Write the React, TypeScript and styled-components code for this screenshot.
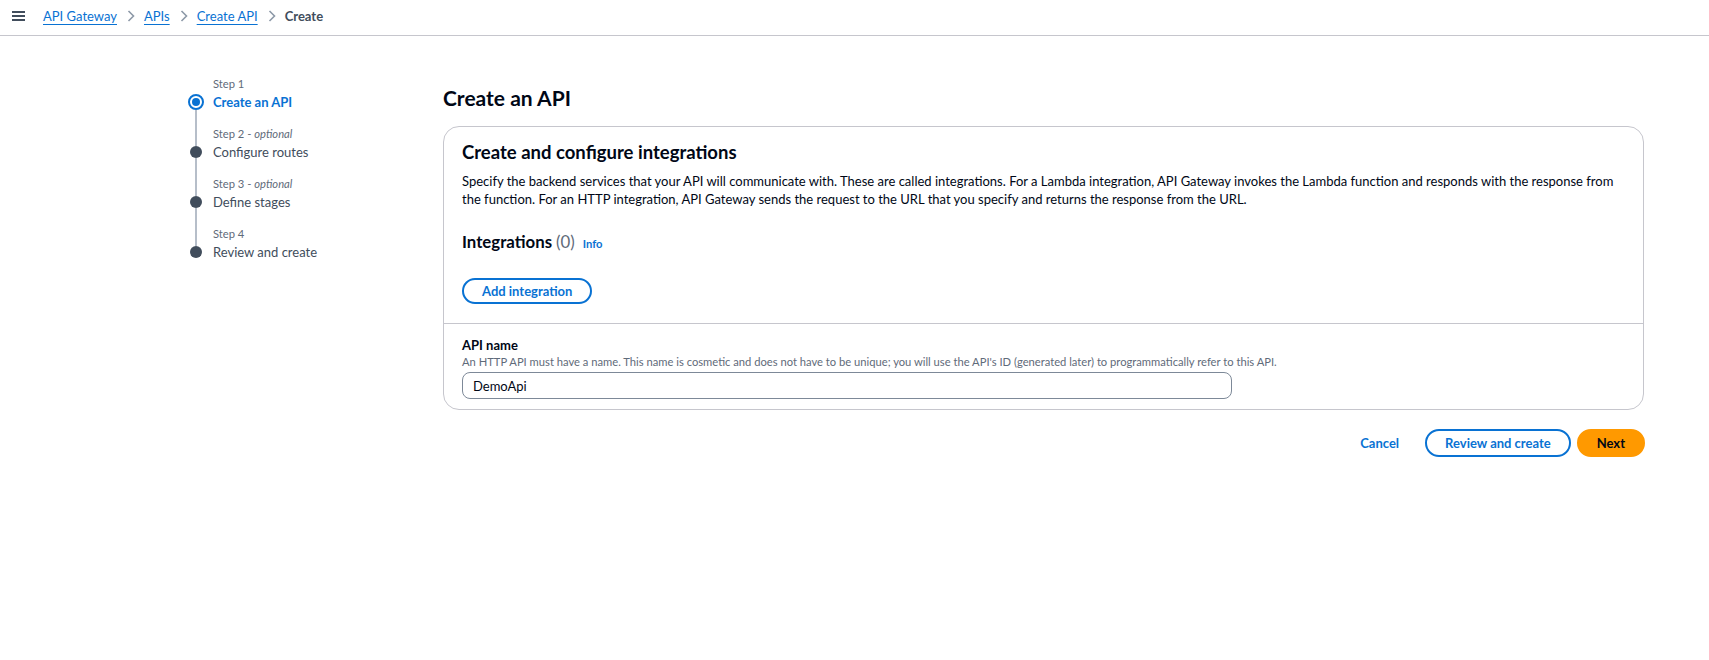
import React from "react";
import styled, { createGlobalStyle } from "styled-components";

const GlobalStyle = createGlobalStyle`
  html, body { margin: 0; padding: 0; background: #ffffff; }
  body {
    font-family: Lato, "Liberation Sans", sans-serif;
    color: #000716;
    -webkit-font-smoothing: antialiased;
  }
  * { box-sizing: border-box; }
`;

const BLUE = "#0972d3";
const GREY = "#5f6b7a";
const DARK = "#414d5c";

/* ---------- top bar ---------- */
const TopBar = styled.header`
  height: 36px;
  border-bottom: 1px solid #c6c6cd;
  display: flex;
  align-items: center;
  padding: 0 0 3px 12px;
`;

const MenuButton = styled.span`
  display: inline-flex;
  width: 13px;
  height: 10px;
  margin-right: 18px;
  color: ${DARK};
`;

const Crumbs = styled.nav`
  display: flex;
  align-items: center;
  font-size: 13px;
`;

const CrumbLink = styled.a`
  color: ${BLUE};
  text-decoration: underline;
  text-underline-offset: 3px;
  text-decoration-thickness: 1px;
  line-height: 18px;
`;

const CrumbCurrent = styled.span`
  color: ${DARK};
  font-weight: 700;
  line-height: 18px;
`;

const CrumbSep = styled.span`
  display: inline-flex;
  width: 8px;
  margin: 0 9px 0 10px;
  color: #8d99a8;
`;

/* ---------- main layout ---------- */
const Main = styled.main`
  display: flex;
  padding: 40px 65px 0 188px;
`;

const StepNav = styled.ol`
  list-style: none;
  margin: 0;
  padding: 0;
  width: 255px;
  flex: none;
`;

const StepItem = styled.li<{ $last?: boolean }>`
  display: grid;
  grid-template-columns: 16px 1fr;
  column-gap: 9px;
  height: ${(p) => (p.$last ? "36px" : "50px")};
`;

const Rail = styled.div`
  display: flex;
  flex-direction: column;
  align-items: center;
`;

const RailSeg = styled.span<{ $h?: number; $off?: boolean }>`
  width: 2px;
  background: ${(p) => (p.$off ? "transparent" : "#b6bec9")};
  ${(p) => (p.$h !== undefined ? `height: ${p.$h}px; flex: none;` : "flex: 1;")}
`;

const ActiveDot = styled.span`
  width: 16px;
  height: 16px;
  flex: none;
  border-radius: 50%;
  border: 2px solid ${BLUE};
  display: flex;
  align-items: center;
  justify-content: center;
  &::after {
    content: "";
    width: 8px;
    height: 8px;
    border-radius: 50%;
    background: ${BLUE};
  }
`;

const Dot = styled.span`
  width: 12px;
  height: 12px;
  flex: none;
  border-radius: 50%;
  background: ${DARK};
`;

const StepText = styled.div`
  display: flex;
  flex-direction: column;
`;

const StepLabel = styled.span`
  font-size: 11.2px;
  line-height: 16px;
  color: ${GREY};
  em { font-style: italic; }
`;

const StepTitle = styled.span<{ $active?: boolean }>`
  font-size: 13px;
  line-height: 20px;
  color: ${(p) => (p.$active ? BLUE : DARK)};
  font-weight: ${(p) => (p.$active ? 700 : 400)};
`;

const Content = styled.section`
  flex: 1;
  min-width: 0;
`;

const PageTitle = styled.h1`
  margin: 8px 0 14px;
  font-size: 21px;
  line-height: 28px;
  font-weight: 700;
`;

const Card = styled.div`
  border: 1px solid #c6c6cd;
  border-radius: 16px;
  overflow: hidden;
`;

const CardSection = styled.div<{ $divided?: boolean }>`
  padding: ${(p) => (p.$divided ? "12px 18px 10px" : "14px 18px 19px")};
  border-top: ${(p) => (p.$divided ? "1px solid #c6c6cd" : "none")};
`;

const CardTitle = styled.h2`
  margin: 0;
  font-size: 18.5px;
  line-height: 22px;
  font-weight: 700;
`;

const Description = styled.p`
  margin: 10px 0 0;
  font-size: 13px;
  line-height: 17.5px;
`;

const SubHeading = styled.h3`
  margin: 23px 0 0;
  display: flex;
  align-items: baseline;
  font-size: 16.8px;
  line-height: 22px;
  font-weight: 700;
`;

const Counter = styled.span`
  font-weight: 400;
  color: ${GREY};
  margin-left: 4px;
`;

const InfoLink = styled.a`
  margin-left: 8px;
  font-size: 11.2px;
  font-weight: 700;
  color: ${BLUE};
`;

const Button = styled.button<{ $variant?: "normal" | "primary" | "link" }>`
  font-family: inherit;
  font-size: 13px;
  font-weight: 700;
  height: 28px;
  padding: 0 18px;
  border-radius: 20px;
  cursor: pointer;
  border: 2px solid
    ${(p) => (p.$variant === "primary" ? "#ff9900" : p.$variant === "link" ? "transparent" : BLUE)};
  background: ${(p) => (p.$variant === "primary" ? "#ff9900" : "#ffffff")};
  color: ${(p) => (p.$variant === "primary" ? "#000716" : BLUE)};
`;

const AddButton = styled(Button)`
  display: block;
  height: 26px;
  margin-top: 23px;
`;

const FieldLabel = styled.label`
  display: block;
  font-size: 13px;
  line-height: 18px;
  font-weight: 700;
`;

const FieldHint = styled.div`
  font-size: 11.2px;
  line-height: 16px;
  color: ${GREY};
`;

const TextInput = styled.input`
  display: block;
  margin-top: 2px;
  width: 770px;
  height: 27px;
  padding: 0 10px;
  border: 1px solid #7d8998;
  border-radius: 8px;
  font-family: inherit;
  font-size: 13px;
  color: #000716;
  outline: none;
`;

const Actions = styled.div`
  display: flex;
  justify-content: flex-end;
  gap: 6px;
  margin: 19px -1px 0 0;
`;

/* ---------- icons ---------- */
const MenuIcon = () => (
  <svg width="13" height="10" viewBox="0 0 13 10" fill="none">
    <path d="M0 1h13M0 5h13M0 9h13" stroke="currentColor" strokeWidth="2" />
  </svg>
);

const Chevron = () => (
  <svg width="8" height="12" viewBox="0 0 8 12" fill="none">
    <path d="M1.5 1l5 5-5 5" stroke="currentColor" strokeWidth="1.6" />
  </svg>
);

const steps = [
  { n: 1, title: "Create an API", optional: false },
  { n: 2, title: "Configure routes", optional: true },
  { n: 3, title: "Define stages", optional: true },
  { n: 4, title: "Review and create", optional: false },
];

export default function App() {
  return (
    <>
      <GlobalStyle />
      <TopBar>
        <MenuButton>
          <MenuIcon />
        </MenuButton>
        <Crumbs>
          <CrumbLink href="#">API Gateway</CrumbLink>
          <CrumbSep>
            <Chevron />
          </CrumbSep>
          <CrumbLink href="#">APIs</CrumbLink>
          <CrumbSep>
            <Chevron />
          </CrumbSep>
          <CrumbLink href="#">Create API</CrumbLink>
          <CrumbSep>
            <Chevron />
          </CrumbSep>
          <CrumbCurrent>Create</CrumbCurrent>
        </Crumbs>
      </TopBar>

      <Main>
        <StepNav>
          {steps.map((s, i) => {
            const active = i === 0;
            const last = i === steps.length - 1;
            const size = active ? 16 : 12;
            return (
              <StepItem key={s.n} $last={last}>
                <Rail>
                  <RailSeg $h={16 + (20 - size) / 2} $off={i === 0} />
                  {active ? <ActiveDot /> : <Dot />}
                  <RailSeg $off={last} />
                </Rail>
                <StepText>
                  <StepLabel>
                    Step {s.n}
                    {s.optional && (
                      <>
                        {" - "}
                        <em>optional</em>
                      </>
                    )}
                  </StepLabel>
                  <StepTitle $active={active}>{s.title}</StepTitle>
                </StepText>
              </StepItem>
            );
          })}
        </StepNav>

        <Content>
          <PageTitle>Create an API</PageTitle>
          <Card>
            <CardSection>
              <CardTitle>Create and configure integrations</CardTitle>
              <Description>
                Specify the backend services that your API will communicate with. These are called
                integrations. For a Lambda integration, API Gateway invokes the Lambda function and
                responds with the response from the function. For an HTTP integration, API Gateway
                sends the request to the URL that you specify and returns the response from the URL.
              </Description>
              <SubHeading>
                Integrations <Counter>(0)</Counter>
                <InfoLink>Info</InfoLink>
              </SubHeading>
              <AddButton>Add integration</AddButton>
            </CardSection>
            <CardSection $divided>
              <FieldLabel htmlFor="api-name">API name</FieldLabel>
              <FieldHint>
                An HTTP API must have a name. This name is cosmetic and does not have to be unique;
                you will use the API's ID (generated later) to programmatically refer to this API.
              </FieldHint>
              <TextInput id="api-name" defaultValue="DemoApi" />
            </CardSection>
          </Card>
          <Actions>
            <Button $variant="link">Cancel</Button>
            <Button>Review and create</Button>
            <Button $variant="primary">Next</Button>
          </Actions>
        </Content>
      </Main>
    </>
  );
}
